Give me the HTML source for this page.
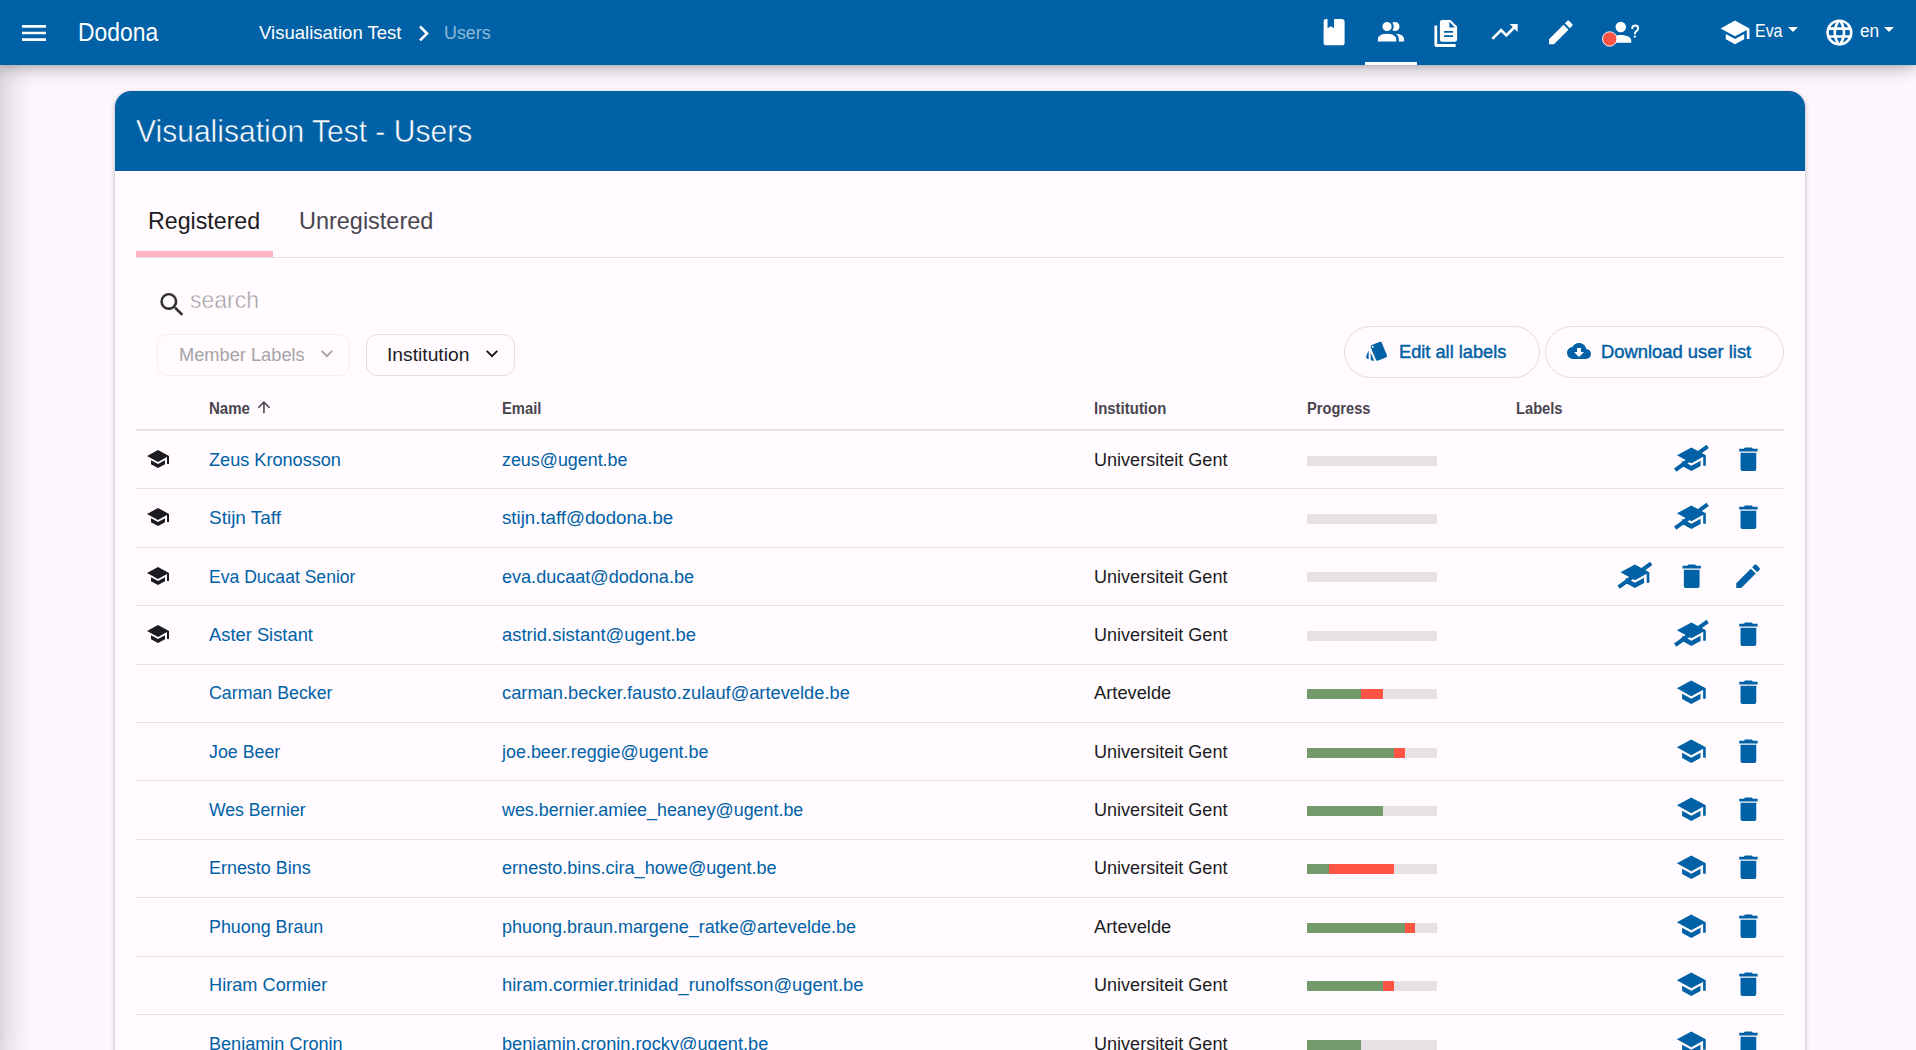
<!DOCTYPE html>
<html lang="en">
<head>
<meta charset="utf-8">
<title>Visualisation Test - Users | Dodona</title>
<meta name="viewport" content="width=device-width, initial-scale=1">
<style>

html,body{margin:0;padding:0;background:#fcf8fd;}
body{font-family:"Liberation Sans",sans-serif;color:#1c1b1f;overflow:hidden;}
#page{position:relative;width:1916px;height:1050px;overflow:hidden;background:#fcf8fd;}
.t{position:absolute;white-space:nowrap;margin:0;padding:0;font-weight:400;text-decoration:none;display:block;transform-origin:0 0;}
.light{-webkit-text-stroke:.55px #0061a6;}
.ph{-webkit-text-stroke:.5px #fffbfe;}
.med{-webkit-text-stroke:.45px #0061a6;}
.i{position:absolute;display:block;fill:#fff;overflow:visible;}
a{color:#0061a6;}
#drawer-shadow{position:absolute;left:-60px;top:0;width:60px;height:1050px;box-shadow:0 10.67px 13.33px -6.67px rgba(0,0,0,.16),0 21.33px 32px 2.67px rgba(0,0,0,.11),0 8px 40px 6.67px rgba(0,0,0,.1);z-index:1;}
nav.top{position:absolute;left:0;top:0;width:1916px;height:65px;background:#0061a6;z-index:4;
  box-shadow:0 2px 4px -1px rgba(0,0,0,.1),0 4px 13px rgba(0,0,0,.16),0 1.3px 26px rgba(0,0,0,.15);}
nav.top .active-bar{position:absolute;left:1365px;top:62px;width:52px;height:3px;background:#fff;}
.caret{position:absolute;width:0;height:0;border-left:5px solid transparent;border-right:5px solid transparent;border-top:5.4px solid #fff;}
main.card{position:absolute;left:115px;top:91px;width:1690px;height:1000px;background:#fffbfe;border-radius:16px 16px 0 0;
  box-shadow:0 1.33px 2.67px rgba(0,0,0,.17),0 1.33px 4px 1.33px rgba(0,0,0,.1);}
.card-title{position:absolute;left:0;top:0;width:1690px;height:80px;background:#0061a6;border-radius:16px 16px 0 0;}
.tabline{position:absolute;left:21px;top:166px;width:1648px;height:1px;background:#e5e1e6;}
.tabactive{position:absolute;left:21px;top:160px;width:137px;height:6px;background:#ffb2bf;}
.btn{position:absolute;box-sizing:border-box;border:1px solid #e0dde1;background:transparent;}
.hline{position:absolute;left:21px;width:1648px;background:#e6e1e5;}
.bar{position:absolute;left:1192px;width:130px;height:10px;background:#e6e1e5;overflow:hidden;}
.bar b{position:absolute;top:0;height:10px;display:block;}
.bar .g{background:#74996a;}
.bar .r{background:#ff5343;}
.strike{stroke:#0061a6;stroke-width:3;}

</style>
</head>
<body>
<div id="page">
<div id="drawer-shadow"></div>
<nav class="top">
<svg class="i" style="left:18px;top:17px;width:32px;height:32px" viewBox="0 0 32 32" aria-hidden="true"><g transform="translate(0 0) scale(1.33333)"><path d="M3,6H21V8H3V6M3,11H21V13H3V11M3,16H21V18H3V16Z"/></g></svg>
<a class="t" href="#" style="left:77.93px;top:16.02px;font-size:25px;line-height:32px;transform:scaleX(0.9150);color:#fff">Dodona</a>
<a class="t" href="#" style="left:258.7px;top:21.03px;font-size:18.67px;line-height:24px;transform:scaleX(0.9934);color:#fff">Visualisation Test</a>
<svg class="i" style="left:407px;top:17px;width:33px;height:33px" viewBox="0 0 33 33" aria-hidden="true"><g transform="translate(0.85 0.65) scale(1.31250)"><path d="M8.59,16.58L13.17,12L8.59,7.41L10,6L16,12L10,18L8.59,16.58Z"/></g></svg>
<a class="t" href="#" style="left:443.63px;top:21.03px;font-size:18.67px;line-height:24px;transform:scaleX(0.9591);color:rgba(255,255,255,.56)">Users</a>
<svg class="i" style="left:1318px;top:16px;width:32px;height:32px" viewBox="0 0 32 32" aria-hidden="true"><g transform="translate(0.35 0.45) scale(1.31250)"><path d="M18,22A2,2 0 0,0 20,20V4C20,2.89 19.1,2 18,2H12V9L9.5,7.5L7,9V2H6A2,2 0 0,0 4,4V20A2,2 0 0,0 6,22H18Z"/></g></svg>
<svg class="i" style="left:1375px;top:16px;width:32px;height:33px" viewBox="0 0 32 33" aria-hidden="true"><g transform="translate(0.25 0.65) scale(1.31250)"><path d="M16 17V19H2V17S2 13 9 13 16 17 16 17M12.5 7.5A3.5 3.5 0 1 0 9 11A3.5 3.5 0 0 0 12.5 7.5M15.94 13A5.32 5.32 0 0 1 18 17V19H22V17S22 13.37 15.94 13M15 4A3.39 3.39 0 0 0 13.07 4.59A5 5 0 0 1 13.07 10.41A3.39 3.39 0 0 0 15 11A3.5 3.5 0 0 0 15 4Z"/></g></svg>
<svg class="i" style="left:1430px;top:15px;width:32px;height:36px" viewBox="1430 15 32 36" aria-hidden="true"><path fill-rule="evenodd" d="M1442.1,19.9H1450.6L1457.1,26.5V39.5a2.2,2.2 0 0 1-2.2,2.2H1442.1a2.2,2.2 0 0 1-2.2-2.2V22.1a2.2,2.2 0 0 1 2.2-2.2ZM1449.4,21.8V27.6H1454.9ZM1444,31h9v1.8h-9ZM1444,35.3h9v1.8h-9Z"/><path d="M1434.4,25.6h2.8v18.5h18.4v2.8h-18.7a2.5,2.5 0 0 1-2.5-2.5Z"/></svg>
<svg class="i" style="left:1488px;top:16px;width:33px;height:32px" viewBox="0 0 33 32" aria-hidden="true"><g transform="translate(0.75 0.15) scale(1.31250)"><path d="M16,6L18.29,8.29L13.41,13.17L9.41,9.17L2,16.59L3.41,18L9.41,12L13.41,16L19.71,9.71L22,12V6H16Z"/></g></svg>
<svg class="i" style="left:1545px;top:16px;width:32px;height:33px" viewBox="0 0 32 33" aria-hidden="true"><g transform="translate(0.05 0.65) scale(1.31250)"><path d="M20.71,7.04C21.1,6.65 21.1,6 20.71,5.63L18.37,3.29C18,2.9 17.35,2.9 16.96,3.29L15.12,5.12L18.87,8.87M3,17.25V21H6.75L17.81,9.93L14.06,6.18L3,17.25Z"/></g></svg>
<svg class="i" style="left:1608px;top:16px;width:33px;height:33px" viewBox="0 0 33 33" aria-hidden="true"><g transform="translate(0.95 0.55) scale(1.31250)"><path d="M13,8A4,4 0 0,1 9,12A4,4 0 0,1 5,8A4,4 0 0,1 9,4A4,4 0 0,1 13,8M17,18V20H1V18C1,15.79 4.58,14 9,14C13.42,14 17,15.79 17,18M20.5,14.5V16H19V14.5H20.5M18.5,9.5H17V9A3,3 0 0,1 20,6A3,3 0 0,1 23,9C23,9.97 22.5,10.88 21.71,11.41L21.41,11.6C20.84,12 20.5,12.61 20.5,13.3V13.5H19V13.3C19,12.11 19.6,11 20.59,10.35L20.88,10.16C21.27,9.9 21.5,9.47 21.5,9A1.5,1.5 0 0,0 20,7.5A1.5,1.5 0 0,0 18.5,9V9.5Z"/></g></svg>
<svg class="i" style="left:1600px;top:29px;width:20px;height:20px" viewBox="0 0 20 20" aria-hidden="true"><circle cx="9.7" cy="9.95" r="7.2" fill="#fa5343" stroke="#fff" stroke-width="1" stroke-opacity=".92"/></svg>
<span class="active-bar"></span>
<svg class="i" style="left:1719px;top:16px;width:32px;height:33px" viewBox="0 0 32 33" aria-hidden="true"><g transform="translate(0.25 0.65) scale(1.31250)"><path d="M12,3L1,9L12,15L21,10.09V17H23V9M5,13.18V17.18L12,21L19,17.18V13.18L12,17L5,13.18Z"/></g></svg>
<a class="t" href="#" style="left:1754.58px;top:20.03px;font-size:17.6px;line-height:23px;transform:scaleX(0.9061);color:#fff">Eva</a>
<span class="caret" style="left:1788px;top:26.7px"></span>
<svg class="i" style="left:1823px;top:16px;width:33px;height:33px" viewBox="0 0 33 33" aria-hidden="true"><g transform="translate(0.65 0.75) scale(1.31250)"><path d="M16.36,14C16.44,13.34 16.5,12.68 16.5,12C16.5,11.32 16.44,10.66 16.36,10H19.74C19.9,10.64 20,11.31 20,12C20,12.69 19.9,13.36 19.74,14M14.59,19.56C15.19,18.45 15.65,17.25 15.97,16H18.92C17.96,17.65 16.43,18.93 14.59,19.56M14.34,14H9.66C9.56,13.34 9.5,12.68 9.5,12C9.5,11.32 9.56,10.65 9.66,10H14.34C14.43,10.65 14.5,11.32 14.5,12C14.5,12.68 14.43,13.34 14.34,14M12,19.96C11.17,18.76 10.5,17.43 10.09,16H13.91C13.5,17.43 12.83,18.76 12,19.96M8,8H5.08C6.03,6.34 7.57,5.06 9.4,4.44C8.8,5.55 8.35,6.75 8,8M5.08,16H8C8.35,17.25 8.8,18.45 9.4,19.56C7.57,18.93 6.03,17.65 5.08,16M4.26,14C4.1,13.36 4,12.69 4,12C4,11.31 4.1,10.64 4.26,10H7.64C7.56,10.66 7.5,11.32 7.5,12C7.5,12.68 7.56,13.34 7.64,14M12,4.03C12.83,5.23 13.5,6.57 13.91,8H10.09C10.5,6.57 11.17,5.23 12,4.03M18.92,8H15.97C15.65,6.75 15.19,5.55 14.59,4.44C16.43,5.07 17.96,6.34 18.92,8M12,2C6.47,2 2,6.5 2,12A10,10 0 0,0 12,22A10,10 0 0,0 22,12A10,10 0 0,0 12,2Z"/></g></svg>
<a class="t" href="#" style="left:1859.56px;top:20.03px;font-size:17.6px;line-height:23px;transform:scaleX(0.9812);color:#fff">en</a>
<span class="caret" style="left:1884px;top:26.7px"></span>
</nav>
<main class="card">
<div class="card-title">
<h2 class="t light" style="left:21.09px;top:19.04px;font-size:32px;line-height:42px;transform:scaleX(0.9388);color:#fff">Visualisation Test - Users</h2>
</div>
<a class="t" href="#" style="left:33.23px;top:114.03px;font-size:24px;line-height:31px;transform:scaleX(0.9665);color:#1c1b1f">Registered</a>
<a class="t" href="#" style="left:184.02px;top:114.03px;font-size:24px;line-height:31px;transform:scaleX(0.9774);color:#49454f">Unregistered</a>
<div class="tabactive"></div><div class="tabline"></div>
<svg class="i" style="left:41px;top:197px;width:32px;height:33px;fill:#333" viewBox="0 0 32 33" aria-hidden="true"><g transform="translate(0.35 0.95) scale(1.31250)"><path d="M9.5,3A6.5,6.5 0 0,1 16,9.5C16,11.11 15.41,12.59 14.44,13.73L14.71,14H15.5L20.5,19L19,20.5L14,15.5V14.71L13.73,14.44C12.59,15.41 11.11,16 9.5,16A6.5,6.5 0 0,1 3,9.5A6.5,6.5 0 0,1 9.5,3M9.5,5C7,5 5,7 5,9.5C5,12 7,14 9.5,14C12,14 14,12 14,9.5C14,7 12,5 9.5,5Z"/></g></svg>
<span class="t ph" style="left:75.29px;top:193.03px;font-size:24px;line-height:31px;transform:scaleX(0.9574);color:#9f9ca0">search</span>
<div class="btn" style="left:42.3px;top:243px;width:192.4px;height:42px;border-radius:11px;border-color:#f2eff2"></div>
<span class="t" style="left:63.62px;top:252.03px;font-size:18.67px;line-height:24px;transform:scaleX(0.9775);color:#a6a3a7">Member Labels</span>
<svg class="i" style="left:199px;top:250px;width:25px;height:25px;fill:#a6a3a7" viewBox="0 0 25 25" aria-hidden="true"><g transform="translate(0.9 0.6) scale(1.00000)"><path d="M7.41,8.58L12,13.17L16.59,8.58L18,10L12,16L6,10L7.41,8.58Z"/></g></svg>
<div class="btn" style="left:251px;top:243px;width:149.2px;height:42px;border-radius:11px;border-color:#e2dfe3"></div>
<span class="t" style="left:272.27px;top:252.03px;font-size:18.67px;line-height:24px;transform:scaleX(1.0321);color:#1c1b1f">Institution</span>
<svg class="i" style="left:365px;top:250px;width:24px;height:25px;fill:#1c1b1f" viewBox="0 0 24 25" aria-hidden="true"><g transform="translate(0 0.6) scale(1.00000)"><path d="M7.41,8.58L12,13.17L16.59,8.58L18,10L12,16L6,10L7.41,8.58Z"/></g></svg>
<div class="btn" style="left:1229px;top:235px;width:195.6px;height:52px;border-radius:26px"></div>
<svg class="i" style="left:1249px;top:248px;width:25px;height:24px;fill:#0061a6" viewBox="0 0 25 24" aria-hidden="true"><g transform="translate(0.8 0) scale(1.00000)"><path d="M2.53,19.65L3.87,20.21V11.18L1.44,17.04C1.03,18.06 1.5,19.23 2.53,19.65M22.03,15.95L17.07,4C16.76,3.23 16.03,2.76 15.26,2.74C15,2.74 14.73,2.79 14.47,2.9L7.1,5.95C6.35,6.26 5.89,7 5.87,7.74C5.86,8 5.91,8.29 6,8.55L11,20.5C11.29,21.28 12.03,21.74 12.81,21.75C13.07,21.75 13.33,21.7 13.58,21.6L20.94,18.55C21.96,18.13 22.45,16.96 22.03,15.95M7.88,8.75A1,1 0 0,1 6.88,7.75A1,1 0 0,1 7.88,6.75C8.43,6.75 8.88,7.2 8.88,7.75C8.88,8.3 8.43,8.75 7.88,8.75M5.88,19.75A2,2 0 0,0 7.88,21.75H9.33L5.88,13.41V19.75Z"/></g></svg>
<a class="t med" href="#" style="left:1284.12px;top:249.03px;font-size:18.67px;line-height:24px;transform:scaleX(0.9764);color:#0061a6">Edit all labels</a>
<div class="btn" style="left:1430px;top:235px;width:238.8px;height:52px;border-radius:26px"></div>
<svg class="i" style="left:1452px;top:248px;width:24px;height:24px;fill:#0061a6" viewBox="0 0 24 24" aria-hidden="true"><g transform="translate(0 0) scale(1.00000)"><path d="M17,13L12,18L7,13H10V9H14V13M19.35,10.03C18.67,6.59 15.64,4 12,4C9.11,4 6.6,5.64 5.35,8.03C2.34,8.36 0,10.9 0,14A6,6 0 0,0 6,20H19A5,5 0 0,0 24,15C24,12.36 21.95,10.22 19.35,10.03Z"/></g></svg>
<a class="t med" href="#" style="left:1486.11px;top:249.03px;font-size:18.67px;line-height:24px;transform:scaleX(0.9852);color:#0061a6">Download user list</a>
<span class="t" style="left:93.5px;top:307.03px;font-size:16px;line-height:21px;transform:scaleX(0.9400);font-weight:700;color:#49454f">Name</span>
<svg class="i" style="left:139px;top:306px;width:20px;height:20px;fill:#49454f" viewBox="0 0 20 20" aria-hidden="true"><g transform="translate(0.6 0.8) scale(0.77792)"><path d="M13,20H11V8L5.5,13.5L4.08,12.08L12,4.16L19.92,12.08L18.5,13.5L13,8V20Z"/></g></svg>
<span class="t" style="left:387.3px;top:307.03px;font-size:16px;line-height:21px;transform:scaleX(0.9243);font-weight:700;color:#49454f">Email</span>
<span class="t" style="left:979px;top:307.03px;font-size:16px;line-height:21px;transform:scaleX(0.9351);font-weight:700;color:#49454f">Institution</span>
<span class="t" style="left:1191.58px;top:307.03px;font-size:16px;line-height:21px;transform:scaleX(0.9145);font-weight:700;color:#49454f">Progress</span>
<span class="t" style="left:1400.86px;top:307.03px;font-size:16px;line-height:21px;transform:scaleX(0.9179);font-weight:700;color:#49454f">Labels</span>
<div class="hline" style="top:338px;height:2px"></div>
<div class="row">
<svg class="i" style="left:31px;top:355px;width:24px;height:25px;fill:#1c1b1f" viewBox="0 0 24 25" aria-hidden="true"><g transform="translate(0 0.95) scale(1.00000)"><path d="M12,3L1,9L12,15L21,10.09V17H23V9M5,13.18V17.18L12,21L19,17.18V13.18L12,17L5,13.18Z"/></g></svg>
<a class="t" href="#" style="left:93.8px;top:357.03px;font-size:18.67px;line-height:24px;transform:scaleX(0.9713);color:#0061a6">Zeus Kronosson</a>
<a class="t" href="#" style="left:387.3px;top:357.03px;font-size:18.67px;line-height:24px;transform:scaleX(0.9579);color:#0061a6">zeus@ugent.be</a>
<span class="t" style="left:979px;top:357.03px;font-size:18.67px;line-height:24px;transform:scaleX(0.9679);color:#1c1b1f">Universiteit Gent</span>
<div class="bar" style="top:365px"></div>
<svg class="i" style="left:1556px;top:348px;width:41px;height:41px;fill:#0061a6" viewBox="0 0 41 41" aria-hidden="true"><g transform="translate(4.65 4.55) scale(1.31250)"><path d="M12,3L1,9L12,15L21,10.09V17H23V9M5,13.18V17.18L12,21L19,17.18V13.18L12,17L5,13.18Z"/><path class="strike" d="M-0.35,20.20L24.40,2.15" fill="none"/></g></svg>
<svg class="i" style="left:1617px;top:352px;width:33px;height:33px;fill:#0061a6" viewBox="0 0 33 33" aria-hidden="true"><g transform="translate(0.65 0.55) scale(1.31250)"><path d="M19,4H15.5L14.5,3H9.5L8.5,4H5V6H19M6,19A2,2 0 0,0 8,21H16A2,2 0 0,0 18,19V7H6V19Z"/></g></svg>
<div class="hline" style="top:397px;height:1px"></div>
</div>
<div class="row">
<svg class="i" style="left:31px;top:413px;width:24px;height:25px;fill:#1c1b1f" viewBox="0 0 24 25" aria-hidden="true"><g transform="translate(0 0.95) scale(1.00000)"><path d="M12,3L1,9L12,15L21,10.09V17H23V9M5,13.18V17.18L12,21L19,17.18V13.18L12,17L5,13.18Z"/></g></svg>
<a class="t" href="#" style="left:93.8px;top:415.03px;font-size:18.67px;line-height:24px;transform:scaleX(1.0169);color:#0061a6">Stijn Taff</a>
<a class="t" href="#" style="left:387.3px;top:415.03px;font-size:18.67px;line-height:24px;transform:scaleX(1.0005);color:#0061a6">stijn.taff@dodona.be</a>
<div class="bar" style="top:423px"></div>
<svg class="i" style="left:1556px;top:406px;width:41px;height:41px;fill:#0061a6" viewBox="0 0 41 41" aria-hidden="true"><g transform="translate(4.65 4.55) scale(1.31250)"><path d="M12,3L1,9L12,15L21,10.09V17H23V9M5,13.18V17.18L12,21L19,17.18V13.18L12,17L5,13.18Z"/><path class="strike" d="M-0.35,20.20L24.40,2.15" fill="none"/></g></svg>
<svg class="i" style="left:1617px;top:410px;width:33px;height:33px;fill:#0061a6" viewBox="0 0 33 33" aria-hidden="true"><g transform="translate(0.65 0.55) scale(1.31250)"><path d="M19,4H15.5L14.5,3H9.5L8.5,4H5V6H19M6,19A2,2 0 0,0 8,21H16A2,2 0 0,0 18,19V7H6V19Z"/></g></svg>
<div class="hline" style="top:456px;height:1px"></div>
</div>
<div class="row">
<svg class="i" style="left:31px;top:472px;width:24px;height:25px;fill:#1c1b1f" viewBox="0 0 24 25" aria-hidden="true"><g transform="translate(0 0.95) scale(1.00000)"><path d="M12,3L1,9L12,15L21,10.09V17H23V9M5,13.18V17.18L12,21L19,17.18V13.18L12,17L5,13.18Z"/></g></svg>
<a class="t" href="#" style="left:93.8px;top:474.03px;font-size:18.67px;line-height:24px;transform:scaleX(0.9412);color:#0061a6">Eva Ducaat Senior</a>
<a class="t" href="#" style="left:387.3px;top:474.03px;font-size:18.67px;line-height:24px;transform:scaleX(0.9678);color:#0061a6">eva.ducaat@dodona.be</a>
<span class="t" style="left:979px;top:474.03px;font-size:18.67px;line-height:24px;transform:scaleX(0.9679);color:#1c1b1f">Universiteit Gent</span>
<div class="bar" style="top:481px"></div>
<svg class="i" style="left:1500px;top:465px;width:40px;height:41px;fill:#0061a6" viewBox="0 0 40 41" aria-hidden="true"><g transform="translate(4.15 4.55) scale(1.31250)"><path d="M12,3L1,9L12,15L21,10.09V17H23V9M5,13.18V17.18L12,21L19,17.18V13.18L12,17L5,13.18Z"/><path class="strike" d="M-0.35,20.20L24.40,2.15" fill="none"/></g></svg>
<svg class="i" style="left:1560px;top:469px;width:33px;height:33px;fill:#0061a6" viewBox="0 0 33 33" aria-hidden="true"><g transform="translate(0.95 0.55) scale(1.31250)"><path d="M19,4H15.5L14.5,3H9.5L8.5,4H5V6H19M6,19A2,2 0 0,0 8,21H16A2,2 0 0,0 18,19V7H6V19Z"/></g></svg>
<svg class="i" style="left:1617px;top:469px;width:32px;height:33px;fill:#0061a6" viewBox="0 0 32 33" aria-hidden="true"><g transform="translate(0.35 0.55) scale(1.31250)"><path d="M20.71,7.04C21.1,6.65 21.1,6 20.71,5.63L18.37,3.29C18,2.9 17.35,2.9 16.96,3.29L15.12,5.12L18.87,8.87M3,17.25V21H6.75L17.81,9.93L14.06,6.18L3,17.25Z"/></g></svg>
<div class="hline" style="top:514px;height:1px"></div>
</div>
<div class="row">
<svg class="i" style="left:31px;top:530px;width:24px;height:25px;fill:#1c1b1f" viewBox="0 0 24 25" aria-hidden="true"><g transform="translate(0 0.95) scale(1.00000)"><path d="M12,3L1,9L12,15L21,10.09V17H23V9M5,13.18V17.18L12,21L19,17.18V13.18L12,17L5,13.18Z"/></g></svg>
<a class="t" href="#" style="left:93.8px;top:532.03px;font-size:18.67px;line-height:24px;transform:scaleX(0.9829);color:#0061a6">Aster Sistant</a>
<a class="t" href="#" style="left:387.3px;top:532.03px;font-size:18.67px;line-height:24px;transform:scaleX(0.9887);color:#0061a6">astrid.sistant@ugent.be</a>
<span class="t" style="left:979px;top:532.03px;font-size:18.67px;line-height:24px;transform:scaleX(0.9679);color:#1c1b1f">Universiteit Gent</span>
<div class="bar" style="top:540px"></div>
<svg class="i" style="left:1556px;top:523px;width:41px;height:41px;fill:#0061a6" viewBox="0 0 41 41" aria-hidden="true"><g transform="translate(4.65 4.55) scale(1.31250)"><path d="M12,3L1,9L12,15L21,10.09V17H23V9M5,13.18V17.18L12,21L19,17.18V13.18L12,17L5,13.18Z"/><path class="strike" d="M-0.35,20.20L24.40,2.15" fill="none"/></g></svg>
<svg class="i" style="left:1617px;top:527px;width:33px;height:33px;fill:#0061a6" viewBox="0 0 33 33" aria-hidden="true"><g transform="translate(0.65 0.55) scale(1.31250)"><path d="M19,4H15.5L14.5,3H9.5L8.5,4H5V6H19M6,19A2,2 0 0,0 8,21H16A2,2 0 0,0 18,19V7H6V19Z"/></g></svg>
<div class="hline" style="top:573px;height:1px"></div>
</div>
<div class="row">
<a class="t" href="#" style="left:93.8px;top:590.03px;font-size:18.67px;line-height:24px;transform:scaleX(0.9528);color:#0061a6">Carman Becker</a>
<a class="t" href="#" style="left:387.3px;top:590.03px;font-size:18.67px;line-height:24px;transform:scaleX(0.9799);color:#0061a6">carman.becker.fausto.zulauf@artevelde.be</a>
<span class="t" style="left:979px;top:590.03px;font-size:18.67px;line-height:24px;transform:scaleX(0.9806);color:#1c1b1f">Artevelde</span>
<div class="bar" style="top:598px"><b class="g" style="left:0;width:54px"></b><b class="r" style="left:54px;width:22px"></b></div>
<svg class="i" style="left:1560px;top:585px;width:33px;height:33px;fill:#0061a6" viewBox="0 0 33 33" aria-hidden="true"><g transform="translate(0.55 0.55) scale(1.31250)"><path d="M12,3L1,9L12,15L21,10.09V17H23V9M5,13.18V17.18L12,21L19,17.18V13.18L12,17L5,13.18Z"/></g></svg>
<svg class="i" style="left:1617px;top:585px;width:33px;height:33px;fill:#0061a6" viewBox="0 0 33 33" aria-hidden="true"><g transform="translate(0.65 0.55) scale(1.31250)"><path d="M19,4H15.5L14.5,3H9.5L8.5,4H5V6H19M6,19A2,2 0 0,0 8,21H16A2,2 0 0,0 18,19V7H6V19Z"/></g></svg>
<div class="hline" style="top:631px;height:1px"></div>
</div>
<div class="row">
<a class="t" href="#" style="left:93.8px;top:649.03px;font-size:18.67px;line-height:24px;transform:scaleX(0.9546);color:#0061a6">Joe Beer</a>
<a class="t" href="#" style="left:387.3px;top:649.03px;font-size:18.67px;line-height:24px;transform:scaleX(0.9604);color:#0061a6">joe.beer.reggie@ugent.be</a>
<span class="t" style="left:979px;top:649.03px;font-size:18.67px;line-height:24px;transform:scaleX(0.9679);color:#1c1b1f">Universiteit Gent</span>
<div class="bar" style="top:657px"><b class="g" style="left:0;width:87px"></b><b class="r" style="left:87px;width:11px"></b></div>
<svg class="i" style="left:1560px;top:644px;width:33px;height:33px;fill:#0061a6" viewBox="0 0 33 33" aria-hidden="true"><g transform="translate(0.55 0.55) scale(1.31250)"><path d="M12,3L1,9L12,15L21,10.09V17H23V9M5,13.18V17.18L12,21L19,17.18V13.18L12,17L5,13.18Z"/></g></svg>
<svg class="i" style="left:1617px;top:644px;width:33px;height:33px;fill:#0061a6" viewBox="0 0 33 33" aria-hidden="true"><g transform="translate(0.65 0.55) scale(1.31250)"><path d="M19,4H15.5L14.5,3H9.5L8.5,4H5V6H19M6,19A2,2 0 0,0 8,21H16A2,2 0 0,0 18,19V7H6V19Z"/></g></svg>
<div class="hline" style="top:689px;height:1px"></div>
</div>
<div class="row">
<a class="t" href="#" style="left:93.8px;top:707.03px;font-size:18.67px;line-height:24px;transform:scaleX(0.9441);color:#0061a6">Wes Bernier</a>
<a class="t" href="#" style="left:387.3px;top:707.03px;font-size:18.67px;line-height:24px;transform:scaleX(0.9578);color:#0061a6">wes.bernier.amiee_heaney@ugent.be</a>
<span class="t" style="left:979px;top:707.03px;font-size:18.67px;line-height:24px;transform:scaleX(0.9679);color:#1c1b1f">Universiteit Gent</span>
<div class="bar" style="top:715px"><b class="g" style="left:0;width:76px"></b></div>
<svg class="i" style="left:1560px;top:702px;width:33px;height:33px;fill:#0061a6" viewBox="0 0 33 33" aria-hidden="true"><g transform="translate(0.55 0.55) scale(1.31250)"><path d="M12,3L1,9L12,15L21,10.09V17H23V9M5,13.18V17.18L12,21L19,17.18V13.18L12,17L5,13.18Z"/></g></svg>
<svg class="i" style="left:1617px;top:702px;width:33px;height:33px;fill:#0061a6" viewBox="0 0 33 33" aria-hidden="true"><g transform="translate(0.65 0.55) scale(1.31250)"><path d="M19,4H15.5L14.5,3H9.5L8.5,4H5V6H19M6,19A2,2 0 0,0 8,21H16A2,2 0 0,0 18,19V7H6V19Z"/></g></svg>
<div class="hline" style="top:748px;height:1px"></div>
</div>
<div class="row">
<a class="t" href="#" style="left:93.8px;top:765.03px;font-size:18.67px;line-height:24px;transform:scaleX(0.9607);color:#0061a6">Ernesto Bins</a>
<a class="t" href="#" style="left:387.3px;top:765.03px;font-size:18.67px;line-height:24px;transform:scaleX(0.9689);color:#0061a6">ernesto.bins.cira_howe@ugent.be</a>
<span class="t" style="left:979px;top:765.03px;font-size:18.67px;line-height:24px;transform:scaleX(0.9679);color:#1c1b1f">Universiteit Gent</span>
<div class="bar" style="top:773px"><b class="g" style="left:0;width:22px"></b><b class="r" style="left:22px;width:65px"></b></div>
<svg class="i" style="left:1560px;top:760px;width:33px;height:33px;fill:#0061a6" viewBox="0 0 33 33" aria-hidden="true"><g transform="translate(0.55 0.55) scale(1.31250)"><path d="M12,3L1,9L12,15L21,10.09V17H23V9M5,13.18V17.18L12,21L19,17.18V13.18L12,17L5,13.18Z"/></g></svg>
<svg class="i" style="left:1617px;top:760px;width:33px;height:33px;fill:#0061a6" viewBox="0 0 33 33" aria-hidden="true"><g transform="translate(0.65 0.55) scale(1.31250)"><path d="M19,4H15.5L14.5,3H9.5L8.5,4H5V6H19M6,19A2,2 0 0,0 8,21H16A2,2 0 0,0 18,19V7H6V19Z"/></g></svg>
<div class="hline" style="top:806px;height:1px"></div>
</div>
<div class="row">
<a class="t" href="#" style="left:93.8px;top:824.03px;font-size:18.67px;line-height:24px;transform:scaleX(0.9580);color:#0061a6">Phuong Braun</a>
<a class="t" href="#" style="left:387.3px;top:824.03px;font-size:18.67px;line-height:24px;transform:scaleX(0.9632);color:#0061a6">phuong.braun.margene_ratke@artevelde.be</a>
<span class="t" style="left:979px;top:824.03px;font-size:18.67px;line-height:24px;transform:scaleX(0.9806);color:#1c1b1f">Artevelde</span>
<div class="bar" style="top:832px"><b class="g" style="left:0;width:98px"></b><b class="r" style="left:98px;width:10px"></b></div>
<svg class="i" style="left:1560px;top:819px;width:33px;height:33px;fill:#0061a6" viewBox="0 0 33 33" aria-hidden="true"><g transform="translate(0.55 0.55) scale(1.31250)"><path d="M12,3L1,9L12,15L21,10.09V17H23V9M5,13.18V17.18L12,21L19,17.18V13.18L12,17L5,13.18Z"/></g></svg>
<svg class="i" style="left:1617px;top:819px;width:33px;height:33px;fill:#0061a6" viewBox="0 0 33 33" aria-hidden="true"><g transform="translate(0.65 0.55) scale(1.31250)"><path d="M19,4H15.5L14.5,3H9.5L8.5,4H5V6H19M6,19A2,2 0 0,0 8,21H16A2,2 0 0,0 18,19V7H6V19Z"/></g></svg>
<div class="hline" style="top:865px;height:1px"></div>
</div>
<div class="row">
<a class="t" href="#" style="left:93.8px;top:882.03px;font-size:18.67px;line-height:24px;transform:scaleX(0.9750);color:#0061a6">Hiram Cormier</a>
<a class="t" href="#" style="left:387.3px;top:882.03px;font-size:18.67px;line-height:24px;transform:scaleX(0.9839);color:#0061a6">hiram.cormier.trinidad_runolfsson@ugent.be</a>
<span class="t" style="left:979px;top:882.03px;font-size:18.67px;line-height:24px;transform:scaleX(0.9679);color:#1c1b1f">Universiteit Gent</span>
<div class="bar" style="top:890px"><b class="g" style="left:0;width:76px"></b><b class="r" style="left:76px;width:11px"></b></div>
<svg class="i" style="left:1560px;top:877px;width:33px;height:33px;fill:#0061a6" viewBox="0 0 33 33" aria-hidden="true"><g transform="translate(0.55 0.55) scale(1.31250)"><path d="M12,3L1,9L12,15L21,10.09V17H23V9M5,13.18V17.18L12,21L19,17.18V13.18L12,17L5,13.18Z"/></g></svg>
<svg class="i" style="left:1617px;top:877px;width:33px;height:33px;fill:#0061a6" viewBox="0 0 33 33" aria-hidden="true"><g transform="translate(0.65 0.55) scale(1.31250)"><path d="M19,4H15.5L14.5,3H9.5L8.5,4H5V6H19M6,19A2,2 0 0,0 8,21H16A2,2 0 0,0 18,19V7H6V19Z"/></g></svg>
<div class="hline" style="top:923px;height:1px"></div>
</div>
<div class="row">
<a class="t" href="#" style="left:93.8px;top:941.03px;font-size:18.67px;line-height:24px;transform:scaleX(0.9691);color:#0061a6">Benjamin Cronin</a>
<a class="t" href="#" style="left:387.3px;top:941.03px;font-size:18.67px;line-height:24px;transform:scaleX(0.9753);color:#0061a6">benjamin.cronin.rocky@ugent.be</a>
<span class="t" style="left:979px;top:941.03px;font-size:18.67px;line-height:24px;transform:scaleX(0.9679);color:#1c1b1f">Universiteit Gent</span>
<div class="bar" style="top:949px"><b class="g" style="left:0;width:54px"></b></div>
<svg class="i" style="left:1560px;top:936px;width:33px;height:33px;fill:#0061a6" viewBox="0 0 33 33" aria-hidden="true"><g transform="translate(0.55 0.55) scale(1.31250)"><path d="M12,3L1,9L12,15L21,10.09V17H23V9M5,13.18V17.18L12,21L19,17.18V13.18L12,17L5,13.18Z"/></g></svg>
<svg class="i" style="left:1617px;top:936px;width:33px;height:33px;fill:#0061a6" viewBox="0 0 33 33" aria-hidden="true"><g transform="translate(0.65 0.55) scale(1.31250)"><path d="M19,4H15.5L14.5,3H9.5L8.5,4H5V6H19M6,19A2,2 0 0,0 8,21H16A2,2 0 0,0 18,19V7H6V19Z"/></g></svg>
<div class="hline" style="top:982px;height:1px"></div>
</div>
</main>
</div>
</body>
</html>
